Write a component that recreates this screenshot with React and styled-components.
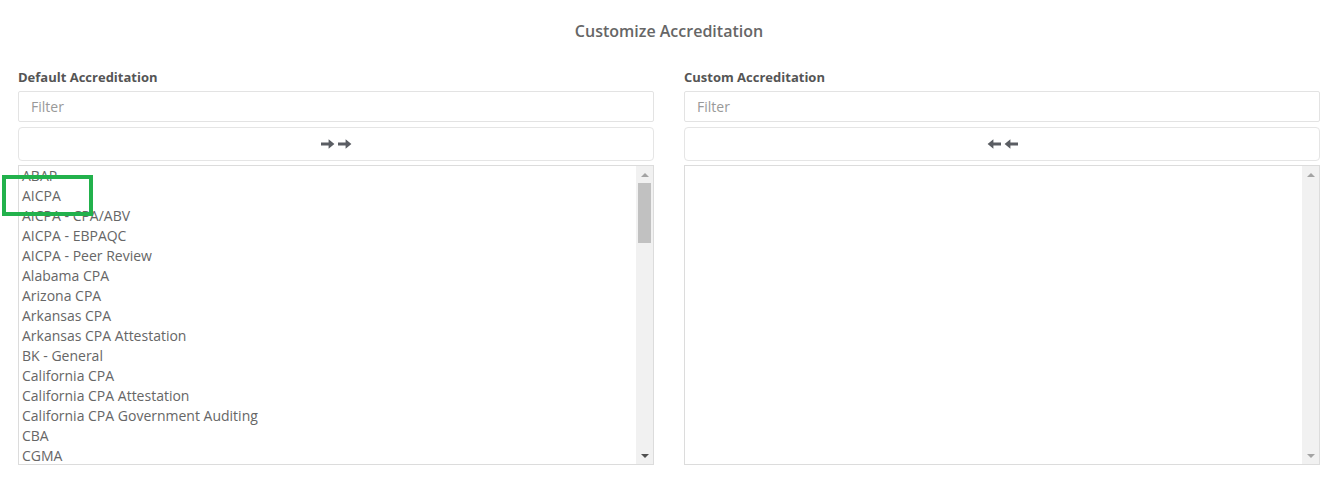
import React from "react";
import styled, { createGlobalStyle } from "styled-components";

const GlobalStyle = createGlobalStyle`
  html, body { margin: 0; padding: 0; background: #fff; }
  body { font-family: "Open Sans", "Noto Sans", sans-serif; color: #555; }
  * { box-sizing: border-box; }
`;

const Page = styled.div`
  position: relative;
  width: 1331px;
  padding: 20px 11px 0 18px;
`;

const Title = styled.h2`
  margin: 0 0 27px;
  text-align: center;
  font-size: 16px;
  line-height: 22px;
  font-weight: 600;
  color: #666;
`;

const Columns = styled.div`
  display: grid;
  grid-template-columns: 636px 636px;
  column-gap: 30px;
`;

const Column = styled.div`
  display: flex;
  flex-direction: column;
`;

const Label = styled.label`
  font-size: 13px;
  line-height: 17px;
  font-weight: 700;
  color: #555;
  margin-bottom: 5px;
`;

const FilterInput = styled.input`
  height: 31px;
  border: 1px solid #e3e3e3;
  border-radius: 2px;
  padding: 0 12px;
  font-family: inherit;
  font-size: 14px;
  color: #555;
  outline: none;
  &::placeholder { color: #999; }
`;

const MoveButton = styled.button`
  margin-top: 5px;
  height: 34px;
  border: 1px solid #e5e5e5;
  border-radius: 4px;
  background: #fff;
  display: flex;
  align-items: center;
  justify-content: center;
  gap: 3px;
  cursor: pointer;
  padding: 0;
`;

const ListBox = styled.div`
  margin-top: 4px;
  height: 300px;
  border: 1px solid #dcdcdc;
  display: flex;
  overflow: hidden;
`;

const ItemsPane = styled.div`
  flex: 1;
  min-width: 0;
  overflow: hidden;
`;

const Item = styled.div`
  padding: 0 3px;
  font-size: 14px;
  line-height: 20px;
  color: #666;
  white-space: nowrap;
`;

const ScrollTrack = styled.div`
  width: 17px;
  flex: none;
  background: #f1f1f1;
  display: flex;
  flex-direction: column;
`;

const ScrollButton = styled.div`
  height: 17px;
  flex: none;
  display: flex;
  align-items: center;
  justify-content: center;
`;

const Triangle = styled.span`
  width: 0;
  height: 0;
  border-left: 4px solid transparent;
  border-right: 4px solid transparent;
  ${(p) =>
    p.$dir === "up"
      ? `border-bottom: 4px solid ${p.$dark ? "#505050" : "#a3a3a3"};`
      : `border-top: 4px solid ${p.$dark ? "#505050" : "#a3a3a3"};`}
`;

const ScrollArea = styled.div`
  flex: 1;
  display: flex;
  flex-direction: column;
  align-items: center;
`;

const Thumb = styled.div`
  width: 13px;
  background: #c1c1c1;
`;

const Highlight = styled.div`
  position: absolute;
  left: 2px;
  top: 175px;
  width: 91px;
  height: 41px;
  border: 4px solid #22b14c;
  pointer-events: none;
`;

const Arrow = ({ dir }) => (
  <svg width="14" height="12" viewBox="0 0 14 12" style={{ transform: dir === "left" ? "scaleX(-1)" : undefined }}>
    <path d="M0 4.6h7.6V1.2L13.4 6l-5.8 4.8V7.4H0z" fill="#5a5d63" />
  </svg>
);

const ScrollBar = ({ thumb, canDown }) => (
  <ScrollTrack>
    <ScrollButton>
      <Triangle $dir="up" />
    </ScrollButton>
    <ScrollArea>{thumb ? <Thumb style={{ height: thumb }} /> : null}</ScrollArea>
    <ScrollButton>
      <Triangle $dir="down" $dark={canDown} />
    </ScrollButton>
  </ScrollTrack>
);

const items = [
  "ABAP", "AICPA", "AICPA - CPA/ABV", "AICPA - EBPAQC", "AICPA - Peer Review",
  "Alabama CPA", "Arizona CPA", "Arkansas CPA", "Arkansas CPA Attestation",
  "BK - General", "California CPA", "California CPA Attestation",
  "California CPA Government Auditing", "CBA", "CGMA",
];

export default function App() {
  return (
    <Page>
      <GlobalStyle />
      <Title>Customize Accreditation</Title>
      <Columns>
        <Column>
          <Label>Default Accreditation</Label>
          <FilterInput placeholder="Filter" />
          <MoveButton aria-label="Move all">
            <Arrow dir="right" />
            <Arrow dir="right" />
          </MoveButton>
          <ListBox>
            <ItemsPane>
              {items.map((it) => (
                <Item key={it}>{it}</Item>
              ))}
            </ItemsPane>
            <ScrollBar thumb={60} canDown />
          </ListBox>
        </Column>
        <Column>
          <Label>Custom Accreditation</Label>
          <FilterInput placeholder="Filter" />
          <MoveButton aria-label="Remove all">
            <Arrow dir="left" />
            <Arrow dir="left" />
          </MoveButton>
          <ListBox>
            <ItemsPane />
            <ScrollBar />
          </ListBox>
        </Column>
      </Columns>
      <Highlight />
    </Page>
  );
}
